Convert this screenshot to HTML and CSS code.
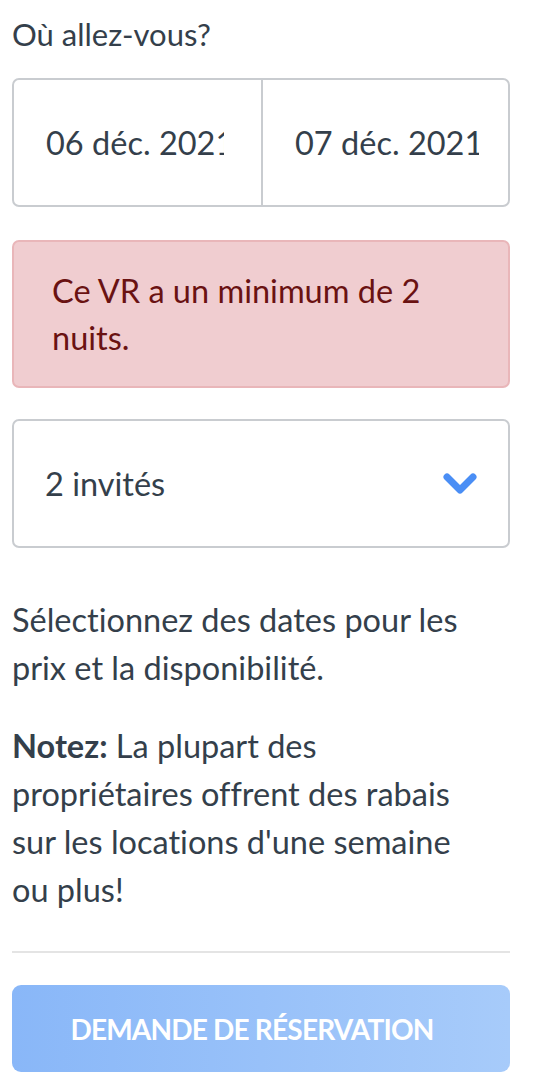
FILE: index.html
```html
<!DOCTYPE html>
<html lang="fr">
  <head>
    <meta charset="UTF-8" />
    <meta name="viewport" content="width=device-width, initial-scale=1.0" />
    <title>Réservation</title>
    <link rel="stylesheet" href="styles.css">
  </head>
  <body>
    <div class="booking">
      <h2 class="title">Où allez-vous?</h2>
      <div class="dates">
        <div class="date"><span>06 déc. 2021</span></div>
        <div class="date"><span>07 déc. 2021</span></div>
      </div>
      <div class="alert">Ce VR a un minimum de 2 nuits.</div>
      <div class="guests">
        <span>2 invités</span>
        <svg class="chevron" width="36" height="24" viewBox="0 0 36 24">
          <path d="M5 5 L18 18 L31 5" fill="none" stroke="#4a8ef5" stroke-width="7" stroke-linecap="round" stroke-linejoin="round" />
        </svg>
      </div>
      <p class="info">Sélectionnez des dates pour les prix et la disponibilité.</p>
      <p class="info note"><b>Notez:</b> La plupart des propriétaires offrent des rabais sur les locations d'une semaine ou plus!</p>
      <hr class="divider" />
      <button class="button" disabled>Demande de réservation</button>
    </div>
  </body>
</html>
```

FILE: styles.css
```css
body {
  margin: 0;
  font-family: Lato, "Open Sans", sans-serif;
  font-variant-ligatures: none;
  color: #343f4b;
  background: #ffffff;
}

.booking {
  width: 498px;
  margin-left: 12px;
  padding-top: 14px;
}

.title {
  font-size: 31px;
  font-weight: 400;
  line-height: 40px;
  margin: 0 0 24px;
}

.dates {
  display: flex;
  height: 125px;
  border: 2px solid #c9ccd0;
  border-radius: 7px;
}

.date {
  box-sizing: border-box;
  flex: 0 0 50%;
  min-width: 0;
  display: flex;
  align-items: center;
  padding: 0 29px 0 32px;
  font-size: 32.5px;
  white-space: nowrap;
}
.date:first-child {
  padding-right: 37px;
}
.date span {
  flex: 1;
  min-width: 0;
  overflow: hidden;
}
.date + .date {
  border-left: 2px solid #c9ccd0;
}

.alert {
  margin-top: 33px;
  background-color: #f0cdd0;
  border: 2px solid #e9b6b9;
  border-radius: 7px;
  color: #6a1212;
  font-size: 32.5px;
  line-height: 47px;
  padding: 25px 40px 25px 38px;
}

.guests {
  margin-top: 31px;
  height: 125px;
  border: 2px solid #c9ccd0;
  border-radius: 7px;
  display: flex;
  align-items: center;
  justify-content: space-between;
  padding: 0 30px 0 31px;
  font-size: 32.5px;
}

.chevron {
  display: block;
}

.info {
  font-size: 32.5px;
  line-height: 48px;
  margin: 48px 0 0;
  padding-right: 20px;
}
.info.note {
  margin-top: 30px;
}

.divider {
  border: none;
  border-top: 2px solid #e4e4e4;
  margin: 37px 0 32px;
}

.button {
  display: block;
  width: 100%;
  height: 87px;
  border: none;
  border-radius: 9px;
  padding: 0 18px 0 0;
  background: linear-gradient(90deg, #89b7f8, #a7cbfa);
  color: #ffffff;
  font-family: Lato, sans-serif;
  font-size: 28px;
  font-weight: 700;
  letter-spacing: -0.8px;
  text-transform: uppercase;
}
```
